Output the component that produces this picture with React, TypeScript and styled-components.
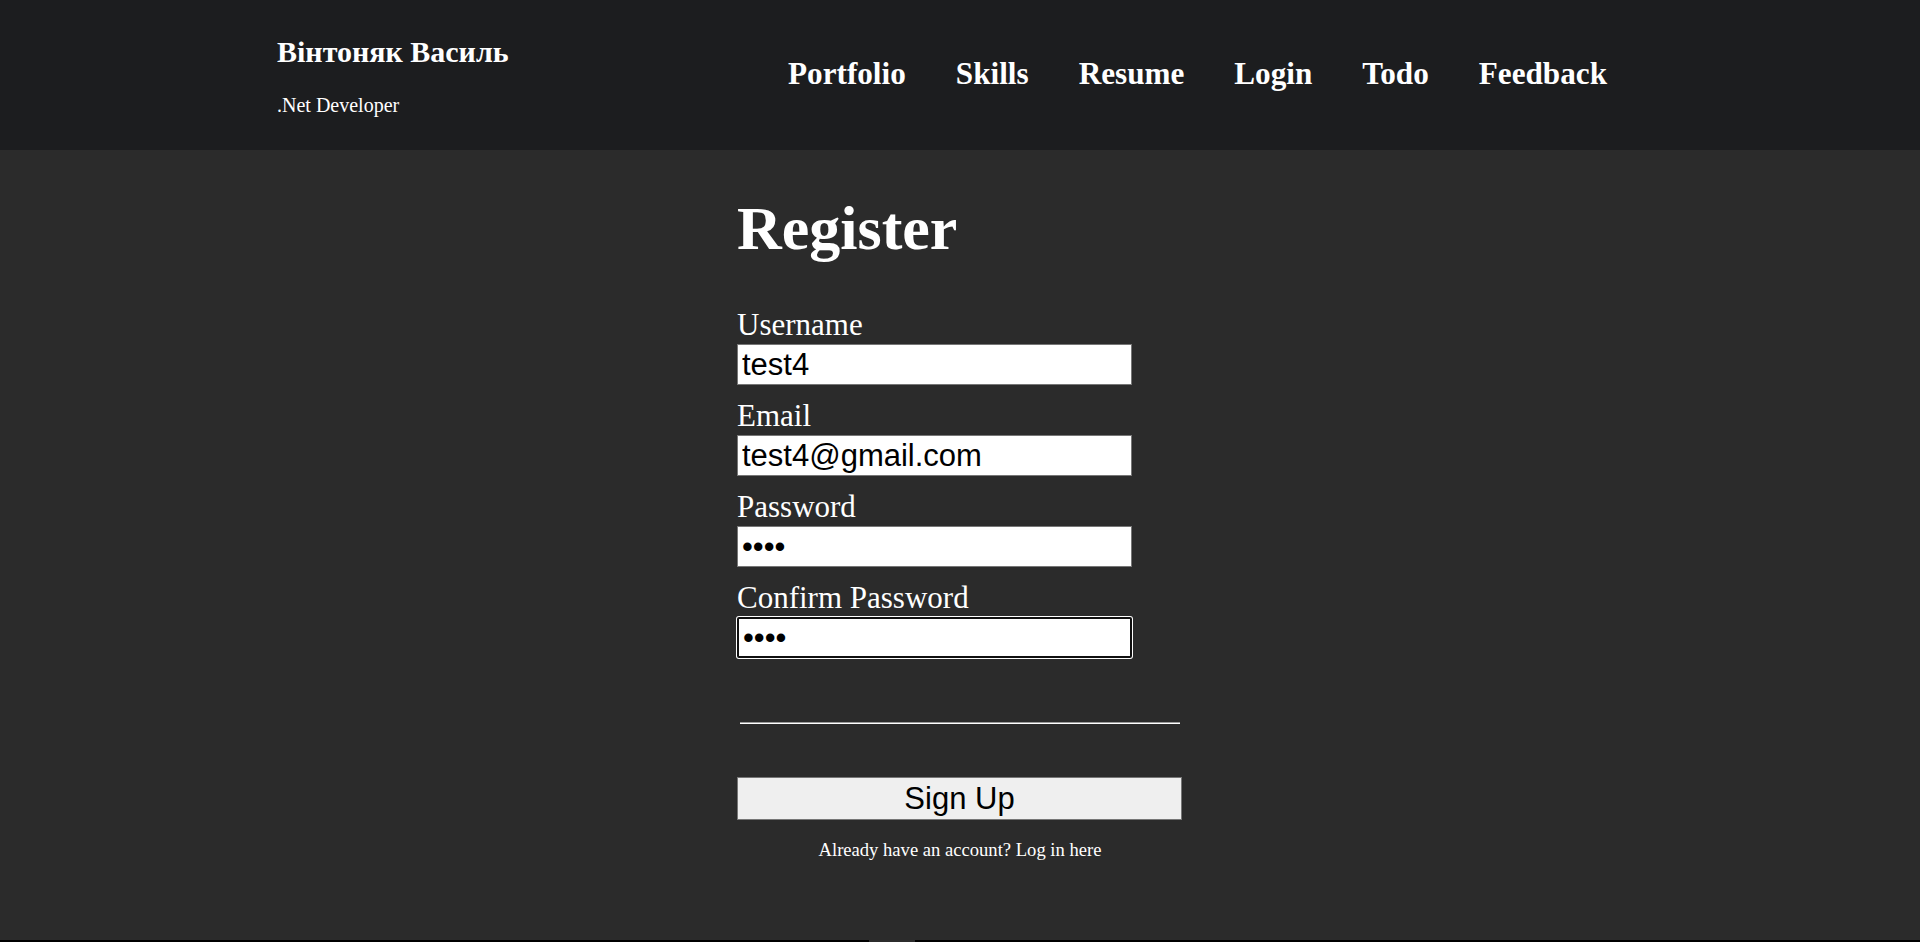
import React from "react";
import styled, { createGlobalStyle } from "styled-components";

const GlobalStyle = createGlobalStyle`
  html, body {
    margin: 0;
    padding: 0;
    background: #2b2b2b;
  }
  body {
    font-family: "Liberation Serif", "Times New Roman", serif;
    color: #ffffff;
  }
  * { box-sizing: border-box; }
`;

const Page = styled.div`
  display: flex;
  flex-direction: column;
  min-height: 100vh;
`;

const Header = styled.header`
  background: #1c1d1f;
  height: 150px;
`;

const HeaderInner = styled.div`
  width: 1366px;
  margin: 0 auto;
  display: flex;
  align-items: flex-start;
  padding-top: 35px;
`;

const Brand = styled.div`
  display: flex;
  flex-direction: column;
`;

const BrandName = styled.h1`
  margin: 0;
  font-size: 30px;
  line-height: 34px;
  font-weight: 700;
  color: #fff;
`;

const BrandRole = styled.p`
  margin: 25px 0 0;
  font-size: 20px;
  line-height: 23px;
  color: #fff;
`;

const Nav = styled.nav`
  margin-left: auto;
  margin-top: 21px;
  padding-right: 36px;
  display: flex;
  gap: 50px;
`;

const NavLink = styled.a`
  font-size: 31.2px;
  line-height: 36px;
  font-weight: 700;
  color: #fff;
  text-decoration: none;
`;

const Main = styled.main`
  height: 790px;
  display: flex;
  justify-content: center;
  padding-top: 42px;
`;

const Form = styled.form`
  width: 446px;
  display: flex;
  flex-direction: column;
`;

const Title = styled.h2`
  margin: 0 0 42px;
  font-size: 62px;
  line-height: 72px;
  font-weight: 700;
  color: #fff;
`;

const Field = styled.div`
  display: flex;
  flex-direction: column;
  margin-bottom: 12px;
`;

const Label = styled.label`
  display: block;
  font-size: 31px;
  line-height: 38px;
  color: #fff;
`;

const Input = styled.input<{ $focused?: boolean }>`
  width: 395px;
  height: 41px;
  margin: 0;
  padding: 0 4px;
  font-family: "Liberation Sans", Arial, sans-serif;
  font-size: 31px;
  color: #000;
  background: #fff;
  border: ${(p) => (p.$focused ? "2px solid #101010" : "1px solid #767676")};
  border-radius: ${(p) => (p.$focused ? "2px" : "0")};
  box-shadow: ${(p) => (p.$focused ? "0 0 0 1px #ffffff" : "none")};
  outline: none;
`;

const Divider = styled.hr`
  width: 440px;
  height: 0;
  margin: 52px auto 53px;
  border: none;
  border-top: 1px solid #9a9a9a;
  border-bottom: 1px solid #ffffff;
`;

const SubmitButton = styled.button`
  width: 445px;
  height: 43px;
  margin: 0;
  padding: 0;
  font-family: "Liberation Sans", Arial, sans-serif;
  font-size: 31px;
  color: #000;
  background: #efefef;
  border: 1px solid #767676;
  border-radius: 0;
`;

const Note = styled.p`
  margin: 19px 0 0;
  text-align: center;
  font-size: 18.6px;
  line-height: 22px;
  color: #fff;
`;

const NoteLink = styled.a`
  color: #fff;
  text-decoration: none;
`;

const Footer = styled.footer`
  background: #000;
  height: 40px;
  display: flex;
  padding-left: 869px;
`;

const FooterTab = styled.div`
  width: 46px;
  height: 6px;
  background: #2c2c2c;
`;

export default function App() {
  const navItems = ["Portfolio", "Skills", "Resume", "Login", "Todo", "Feedback"];
  return (
    <>
      <GlobalStyle />
      <Page>
        <Header>
          <HeaderInner>
            <Brand>
              <BrandName>Вінтоняк Василь</BrandName>
              <BrandRole>.Net Developer</BrandRole>
            </Brand>
            <Nav>
              {navItems.map((item) => (
                <NavLink key={item} href="#">
                  {item}
                </NavLink>
              ))}
            </Nav>
          </HeaderInner>
        </Header>
        <Main>
          <Form onSubmit={(e) => e.preventDefault()}>
            <Title>Register</Title>
            <Field>
              <Label htmlFor="username">Username</Label>
              <Input id="username" type="text" defaultValue="test4" />
            </Field>
            <Field>
              <Label htmlFor="email">Email</Label>
              <Input id="email" type="email" defaultValue="test4@gmail.com" />
            </Field>
            <Field>
              <Label htmlFor="password">Password</Label>
              <Input id="password" type="password" defaultValue="test" />
            </Field>
            <Field>
              <Label htmlFor="confirm">Confirm Password</Label>
              <Input id="confirm" type="password" defaultValue="test" $focused />
            </Field>
            <Divider />
            <SubmitButton type="submit">Sign Up</SubmitButton>
            <Note>
              Already have an account? <NoteLink href="#">Log in here</NoteLink>
            </Note>
          </Form>
        </Main>
        <Footer>
          <FooterTab />
        </Footer>
      </Page>
    </>
  );
}
